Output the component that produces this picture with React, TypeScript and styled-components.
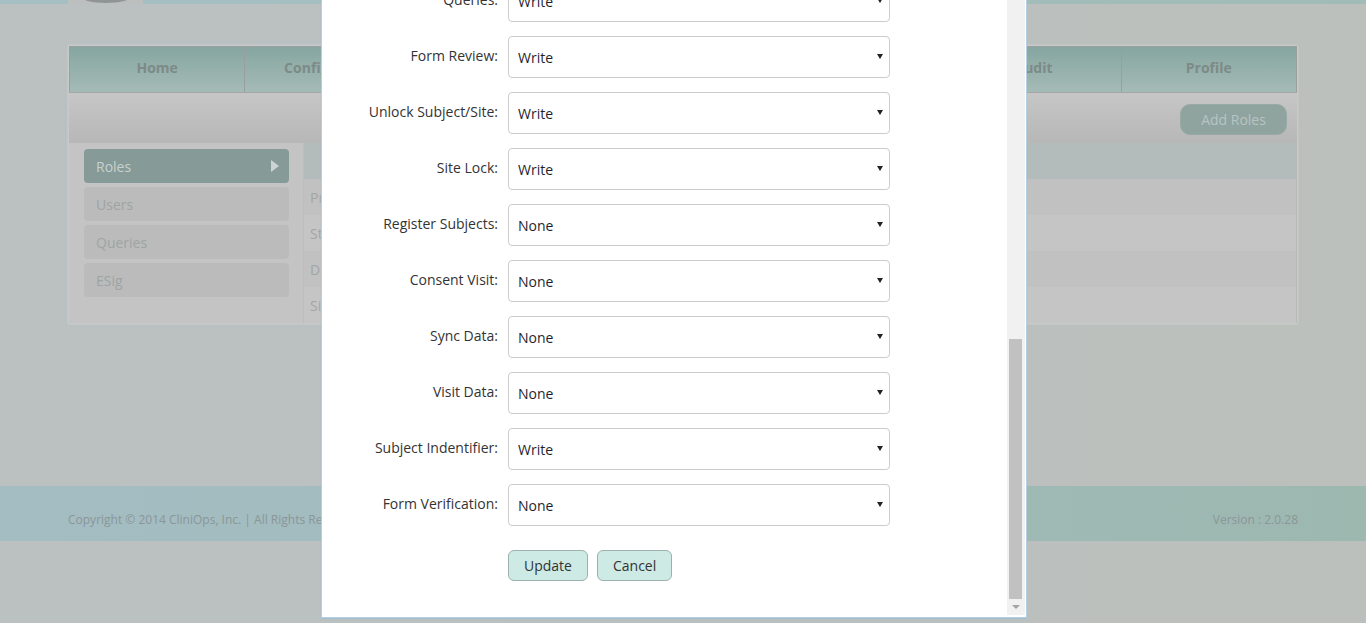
import React, { useLayoutEffect, useRef, useState } from "react";
import styled, { createGlobalStyle } from "styled-components";

const Global = createGlobalStyle`
  html, body { margin: 0; padding: 0; }
  body {
    background: #bbc0bf;
    font-family: "Open Sans", "Liberation Sans", sans-serif;
    overflow: hidden;
    height: 623px;
  }
  #root { position: relative; min-height: 623px; }
`;

const Page = styled.div`
  position: relative;
  height: 623px;
  background: linear-gradient(90deg, #bbc0c1 0%, #bbc0bd 100%);
`;

const TopStrip = styled.div`
  height: 4px;
  background: linear-gradient(90deg, #a6bfc4, #a1bcb6);
  display: flex;
  padding-left: 68px;
`;

const LogoBox = styled.div`
  width: 75px;
  height: 4px;
  background: #bdbfbf;
  display: flex;
  justify-content: center;
  overflow: hidden;
  &::after {
    content: "";
    width: 48px;
    height: 12px;
    margin-top: -9px;
    border-radius: 50%;
    background: #8f9494;
  }
`;

const Container = styled.div`
  width: 1228px;
  margin: 42px auto 0;
  box-shadow: 0 0 2px 1px rgba(220, 224, 224, 0.5);
`;

const Nav = styled.nav`
  display: flex;
  height: 47px;
  border: 1px solid #9c9f9e;
  border-bottom-color: #a3a7a6;
  box-sizing: border-box;
  background: linear-gradient(180deg, #86a6a1 0%, #a5bbb7 100%);
`;

const Tab = styled.div<{ $last?: boolean }>`
  flex: 1;
  display: flex;
  align-items: center;
  justify-content: center;
  padding-bottom: 5px;
  font-size: 14px;
  font-weight: 700;
  color: #7d8a87;
  border-right: ${(p) => (p.$last ? "none" : "1px solid #9a9e9d")};
`;

const Toolbar = styled.div`
  height: 50px;
  background: linear-gradient(180deg, #c6c6c6 0%, #b7b7b7 100%);
  display: flex;
  align-items: center;
  justify-content: flex-end;
  padding-right: 10px;
`;

const AddButton = styled.button`
  width: 107px;
  height: 31px;
  border-radius: 10px;
  border: 1px solid #99a9a6;
  background: #8fa39f;
  color: #b7c5c2;
  font-family: "Open Sans", "Liberation Sans", sans-serif;
  font-size: 14px;
  padding: 0;
  margin-top: 2px;
`;

const Body = styled.div`
  display: flex;
  height: 180px;
  background: #c4c4c4;
`;

const Sidebar = styled.aside`
  width: 235px;
  box-sizing: border-box;
  padding: 6px 14px 0 15px;
  display: flex;
  flex-direction: column;
  gap: 4px;
  border-right: 1px solid #bdbdbd;
`;

const SideItem = styled.div<{ $active?: boolean }>`
  height: 34px;
  border-radius: 4px;
  display: flex;
  align-items: center;
  justify-content: space-between;
  padding: 0 10px 0 12px;
  font-size: 14px;
  background: ${(p) => (p.$active ? "#869b97" : "#bbbbbb")};
  color: ${(p) => (p.$active ? "#c9d1cf" : "#9ea4a3")};
`;

const Arrow = styled.span`
  width: 0;
  height: 0;
  border-top: 6px solid transparent;
  border-bottom: 6px solid transparent;
  border-left: 8px solid #ccd5d3;
`;

const Table = styled.div`
  flex: 1;
  display: flex;
  flex-direction: column;
  border-right: 1px solid #b9b9b9;
`;

const TableHead = styled.div`
  height: 36px;
  background: #b3bcba;
`;

const TableRow = styled.div<{ $alt?: boolean }>`
  height: 36px;
  display: flex;
  align-items: center;
  padding-left: 6px;
  font-size: 14px;
  color: #a1a6a5;
  background: ${(p) => (p.$alt ? "#c5c5c5" : "#c1c1c1")};
`;

const Footer = styled.footer`
  margin-top: 163px;
  height: 55px;
  background: linear-gradient(90deg, #a4bdc3 0%, #a0bab9 55%, #9db8af 100%);
`;

const FooterInner = styled.div`
  width: 1230px;
  margin: 0 auto;
  height: 100%;
  display: flex;
  align-items: center;
  justify-content: space-between;
  font-size: 12px;
  color: #8a9697;
  padding-top: 12px;
  box-sizing: border-box;
`;

const Modal = styled.div`
  position: absolute;
  top: -40px;
  left: 321px;
  width: 706px;
  height: 658px;
  box-sizing: border-box;
  background: #ffffff;
  border: 1px solid #b4cfe2;
  padding-bottom: 2px;
  display: flex;
  box-shadow: 0 1px 1px rgba(150, 190, 215, 0.6);
`;

const Scroller = styled.div`
  flex: 1;
  overflow-y: scroll;
  overflow-x: hidden;
  scrollbar-width: none;
  &::-webkit-scrollbar { display: none; }
`;

const Track = styled.div`
  width: 18px;
  margin-right: 1px;
  background: #f1f1f1;
  display: flex;
  flex-direction: column;
`;

const TrackBody = styled.div`
  flex: 1;
  position: relative;
`;

const Thumb = styled.div`
  position: absolute;
  left: 2px;
  right: 3px;
  background: #c1c1c1;
`;

const ArrowBtn = styled.div`
  height: 16px;
  display: flex;
  align-items: center;
  justify-content: center;
  &::after {
    content: "";
    border-left: 4px solid transparent;
    border-right: 4px solid transparent;
    border-top: 4px solid #a3a3a3;
    margin-right: 1px;
  }
`;

const Form = styled.form`
  display: grid;
  grid-template-columns: 176px 382px;
  column-gap: 10px;
  row-gap: 14px;
  align-items: center;
  padding: 34px 0 34px;
`;

const Title = styled.h3`
  grid-column: 1 / -1;
  height: 40px;
  margin: 0;
  padding-left: 20px;
  font-size: 18px;
  font-weight: 600;
  color: #333;
  line-height: 40px;
`;

const Label = styled.label`
  text-align: right;
  font-size: 14px;
  color: #333;
  margin-top: -4px;
`;

const SelectWrap = styled.div`
  position: relative;
  &::after {
    content: "";
    position: absolute;
    right: 7px;
    top: 18px;
    border-left: 3px solid transparent;
    border-right: 3px solid transparent;
    border-top: 5px solid #222;
    pointer-events: none;
  }
`;

const Select = styled.select`
  appearance: none;
  -webkit-appearance: none;
  width: 100%;
  height: 42px;
  box-sizing: border-box;
  border: 1px solid #cccccc;
  border-radius: 4px;
  background: #fff;
  padding: 0 9px;
  font-family: "Open Sans", "Liberation Sans", sans-serif;
  font-size: 14px;
  color: #1f1f2f;
  outline: none;
`;

const Actions = styled.div`
  grid-column: 2;
  display: flex;
  gap: 9px;
  margin-top: 10px;
`;

const Btn = styled.button`
  height: 31px;
  padding: 0 15px;
  border: 1px solid #9cb2ad;
  border-radius: 6px;
  background: #cdeae4;
  font-family: "Open Sans", "Liberation Sans", sans-serif;
  font-size: 14px;
  color: #333;
`;

const tabs = ["Home", "Configuration", "Subjects", "Forms", "Reports", "Audit", "Profile"];
const side = ["Roles", "Users", "Queries", "ESig"];
const rows = ["Principal Investigator", "Study Coordinator", "Data Manager", "Site Monitor"];

const fields: [string, string][] = [
  ["Role Name:", "Write"],
  ["Study Setup:", "Write"],
  ["Sites:", "Write"],
  ["Users:", "Write"],
  ["Roles:", "Write"],
  ["Forms:", "Write"],
  ["Form Design:", "Write"],
  ["Visits:", "Write"],
  ["Subjects:", "Write"],
  ["Randomization:", "None"],
  ["Reports:", "Write"],
  ["Audit Trail:", "Write"],
  ["Data Export:", "Write"],
  ["Data Import:", "None"],
  ["ESig:", "Write"],
  ["Queries:", "Write"],
  ["Form Review:", "Write"],
  ["Unlock Subject/Site:", "Write"],
  ["Site Lock:", "Write"],
  ["Register Subjects:", "None"],
  ["Consent Visit:", "None"],
  ["Sync Data:", "None"],
  ["Visit Data:", "None"],
  ["Subject Indentifier:", "Write"],
  ["Form Verification:", "None"],
];

export default function App() {
  const ref = useRef<HTMLDivElement>(null);
  const [thumb, setThumb] = useState({ top: 0, size: 0 });
  useLayoutEffect(() => {
    const el = ref.current;
    if (!el) return;
    el.scrollTop = el.scrollHeight;
    const track = el.clientHeight - 32;
    const size = (track * el.clientHeight) / el.scrollHeight;
    const maxScroll = el.scrollHeight - el.clientHeight;
    const top = maxScroll > 0 ? ((track - size) * el.scrollTop) / maxScroll : 0;
    setThumb({ top, size });
  }, []);
  return (
    <>
      <Global />
      <Page>
        <TopStrip>
          <LogoBox />
        </TopStrip>
        <Container>
          <Nav>
            {tabs.map((t, i) => (
              <Tab key={t} $last={i === tabs.length - 1}>
                {t}
              </Tab>
            ))}
          </Nav>
          <Toolbar>
            <AddButton>Add Roles</AddButton>
          </Toolbar>
          <Body>
            <Sidebar>
              {side.map((s, i) => (
                <SideItem key={s} $active={i === 0}>
                  {s}
                  {i === 0 && <Arrow />}
                </SideItem>
              ))}
            </Sidebar>
            <Table>
              <TableHead />
              {rows.map((r, i) => (
                <TableRow key={r} $alt={i % 2 === 1}>
                  {r}
                </TableRow>
              ))}
            </Table>
          </Body>
        </Container>
        <Footer>
          <FooterInner>
            <span>Copyright © 2014 CliniOps, Inc. | All Rights Reserved.</span>
            <span>Version : 2.0.28</span>
          </FooterInner>
        </Footer>
        <Modal>
          <Scroller ref={ref}>
            <Form onSubmit={(e) => e.preventDefault()}>
              <Title>Edit Role</Title>
              {fields.map(([l, v]) => (
                <React.Fragment key={l}>
                  <Label>{l}</Label>
                  <SelectWrap>
                    <Select defaultValue={v}>
                      <option>None</option>
                      <option>Read</option>
                      <option>Write</option>
                    </Select>
                  </SelectWrap>
                </React.Fragment>
              ))}
              <Actions>
                <Btn type="button">Update</Btn>
                <Btn type="button">Cancel</Btn>
              </Actions>
            </Form>
          </Scroller>
          <Track>
            <ArrowBtn style={{ transform: "rotate(180deg)" }} />
            <TrackBody>
              <Thumb style={{ top: thumb.top, height: thumb.size }} />
            </TrackBody>
            <ArrowBtn />
          </Track>
        </Modal>
      </Page>
    </>
  );
}
